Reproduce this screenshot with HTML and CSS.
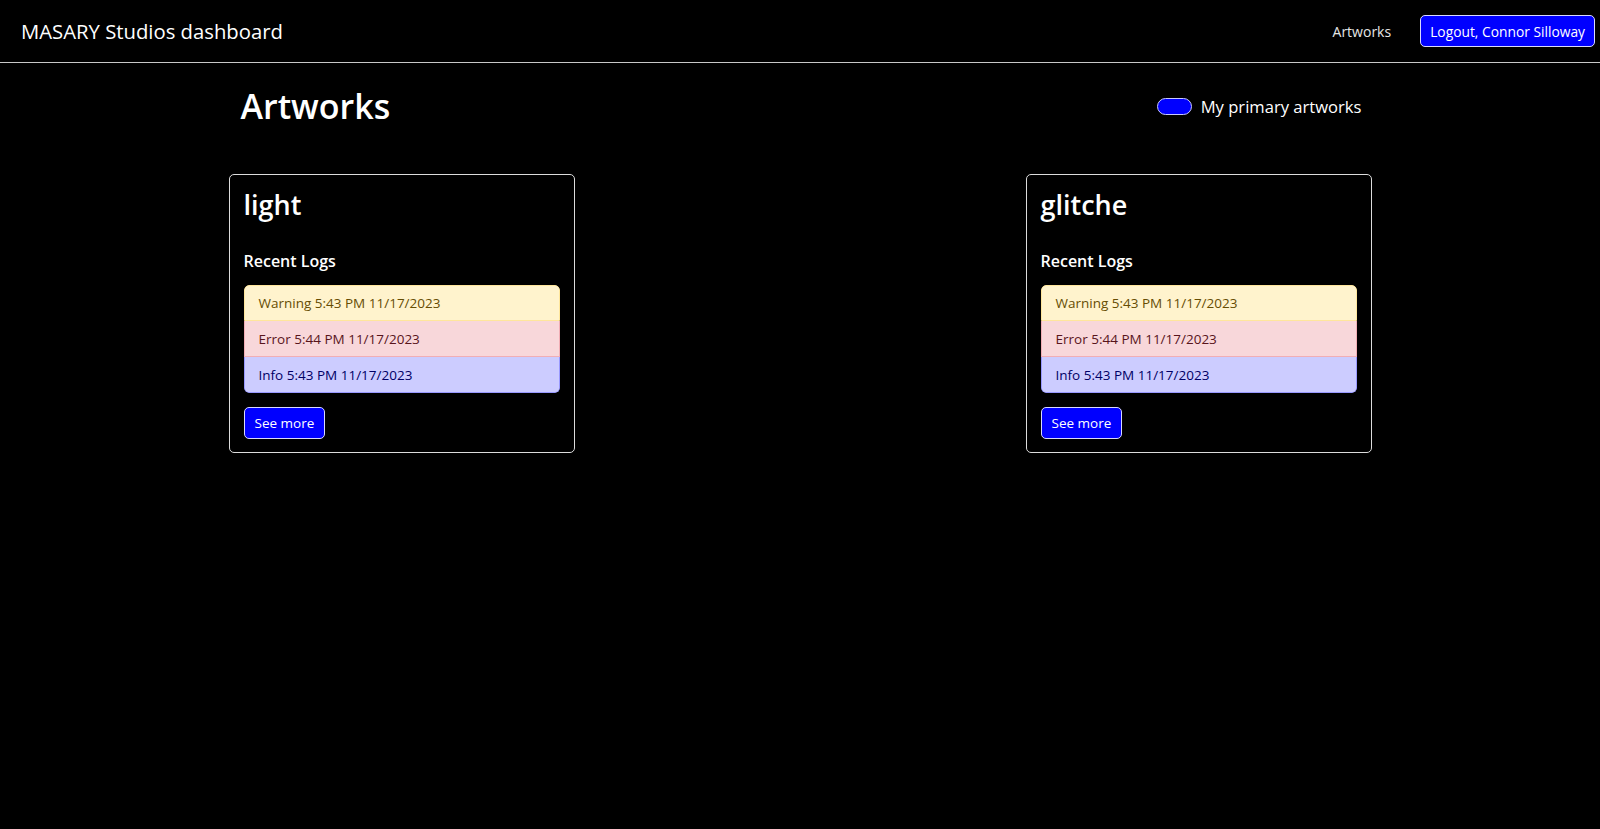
FILE: index.html
```html
<!DOCTYPE html>
<html lang="en">
<head>
<meta charset="utf-8">
<title>MASARY Studios dashboard</title>
<link rel="stylesheet" href="styles.css">
</head>
<body>
<nav class="navbar">
  <span class="brand">MASARY Studios dashboard</span>
  <div class="nav-right">
    <a class="nav-link" href="#">Artworks</a>
    <button class="btn btn-primary btn-logout">Logout, Connor Silloway</button>
  </div>
</nav>
<main class="container">
  <div class="page-header">
    <h1 class="page-title">Artworks</h1>
    <label class="switch">
      <span class="switch-track"></span>
      <span class="switch-label">My primary artworks</span>
    </label>
  </div>
  <div class="cards">
    <div class="card">
      <h2 class="card-title">light</h2>
      <h3 class="card-subtitle">Recent Logs</h3>
      <ul class="list-group">
        <li class="list-item item-warning">Warning 5:43 PM 11/17/2023</li>
        <li class="list-item item-danger">Error 5:44 PM 11/17/2023</li>
        <li class="list-item item-info">Info 5:43 PM 11/17/2023</li>
      </ul>
      <div><button class="btn btn-primary btn-more">See more</button></div>
    </div>
    <div class="card">
      <h2 class="card-title">glitche</h2>
      <h3 class="card-subtitle">Recent Logs</h3>
      <ul class="list-group">
        <li class="list-item item-warning">Warning 5:43 PM 11/17/2023</li>
        <li class="list-item item-danger">Error 5:44 PM 11/17/2023</li>
        <li class="list-item item-info">Info 5:43 PM 11/17/2023</li>
      </ul>
      <div><button class="btn btn-primary btn-more">See more</button></div>
    </div>
  </div>
</main>
</body>
</html>
```
FILE: styles.css
```css
* { box-sizing: border-box; }
html, body {
  margin: 0;
  padding: 0;
  background: #000;
  color: #fff;
  font-family: "Open Sans", "Noto Sans", sans-serif;
  height: 100%;
}
.navbar {
  height: 63px;
  border-bottom: 1px solid #c8c8c8;
  display: flex;
  align-items: center;
  justify-content: space-between;
  padding: 0 5px 0 21px;
}
.brand {
  font-size: 20.3px;
  color: #fff;
}
.nav-right {
  display: flex;
  align-items: center;
  gap: 29px;
}
.nav-link {
  color: #e6e6e6;
  text-decoration: none;
  font-size: 14px;
}
.btn {
  font-family: inherit;
  color: #fff;
  background: #0000ff;
  border: 1px solid #d8d8ff;
  border-radius: 5px;
  cursor: pointer;
}
.btn-logout {
  height: 32px;
  padding: 0 9px;
  font-size: 13.8px;
}
.container {
  width: 1143px;
  margin: 0 auto;
  padding: 0;
}
.page-header {
  display: flex;
  justify-content: space-between;
  align-items: center;
  padding: 23px 10px 0 12px;
}
.page-title {
  margin: 0;
  font-size: 34px;
  font-weight: 600;
  line-height: 1.2;
}
.switch {
  display: flex;
  align-items: center;
  gap: 9px;
}
.switch-track {
  width: 35px;
  height: 17px;
  border-radius: 9px;
  background: #0000ff;
  border: 1px solid #c8c8ff;
  display: inline-block;
}
.switch-label {
  font-size: 16.6px;
}
.cards {
  display: flex;
  justify-content: space-between;
  margin-top: 47px;
}
.card {
  width: 346px;
  border: 1px solid #dcdcdc;
  border-radius: 5px;
  padding: 14px 14px 13px 14px;
}
.card-title {
  margin: 0;
  font-size: 27px;
  font-weight: 600;
  line-height: 1.2;
}
.card-subtitle {
  margin: 31px 0 14px;
  font-size: 16px;
  font-weight: 600;
  line-height: 1.2;
}
.list-group {
  list-style: none;
  margin: 0 0 14px;
  padding: 0;
  border-radius: 5px;
  overflow: hidden;
}
.list-item {
  font-size: 13.5px;
  height: 36px;
  display: flex;
  align-items: center;
  padding: 0 14px;
  border: 1px solid;
}
.list-item + .list-item { border-top-width: 0; }
.list-item:first-child { border-radius: 5px 5px 0 0; }
.list-item:last-child { border-radius: 0 0 5px 5px; }
.item-warning { background: #fff3cd; color: #664d03; border-color: #ffe69c; }
.item-danger { background: #f8d7da; color: #58151c; border-color: #f1aeb5; }
.item-info { background: #ccccff; color: #000066; border-color: #9999ff; }
.btn-more {
  height: 32px;
  padding: 0 10px;
  font-size: 13.5px;
}
```
